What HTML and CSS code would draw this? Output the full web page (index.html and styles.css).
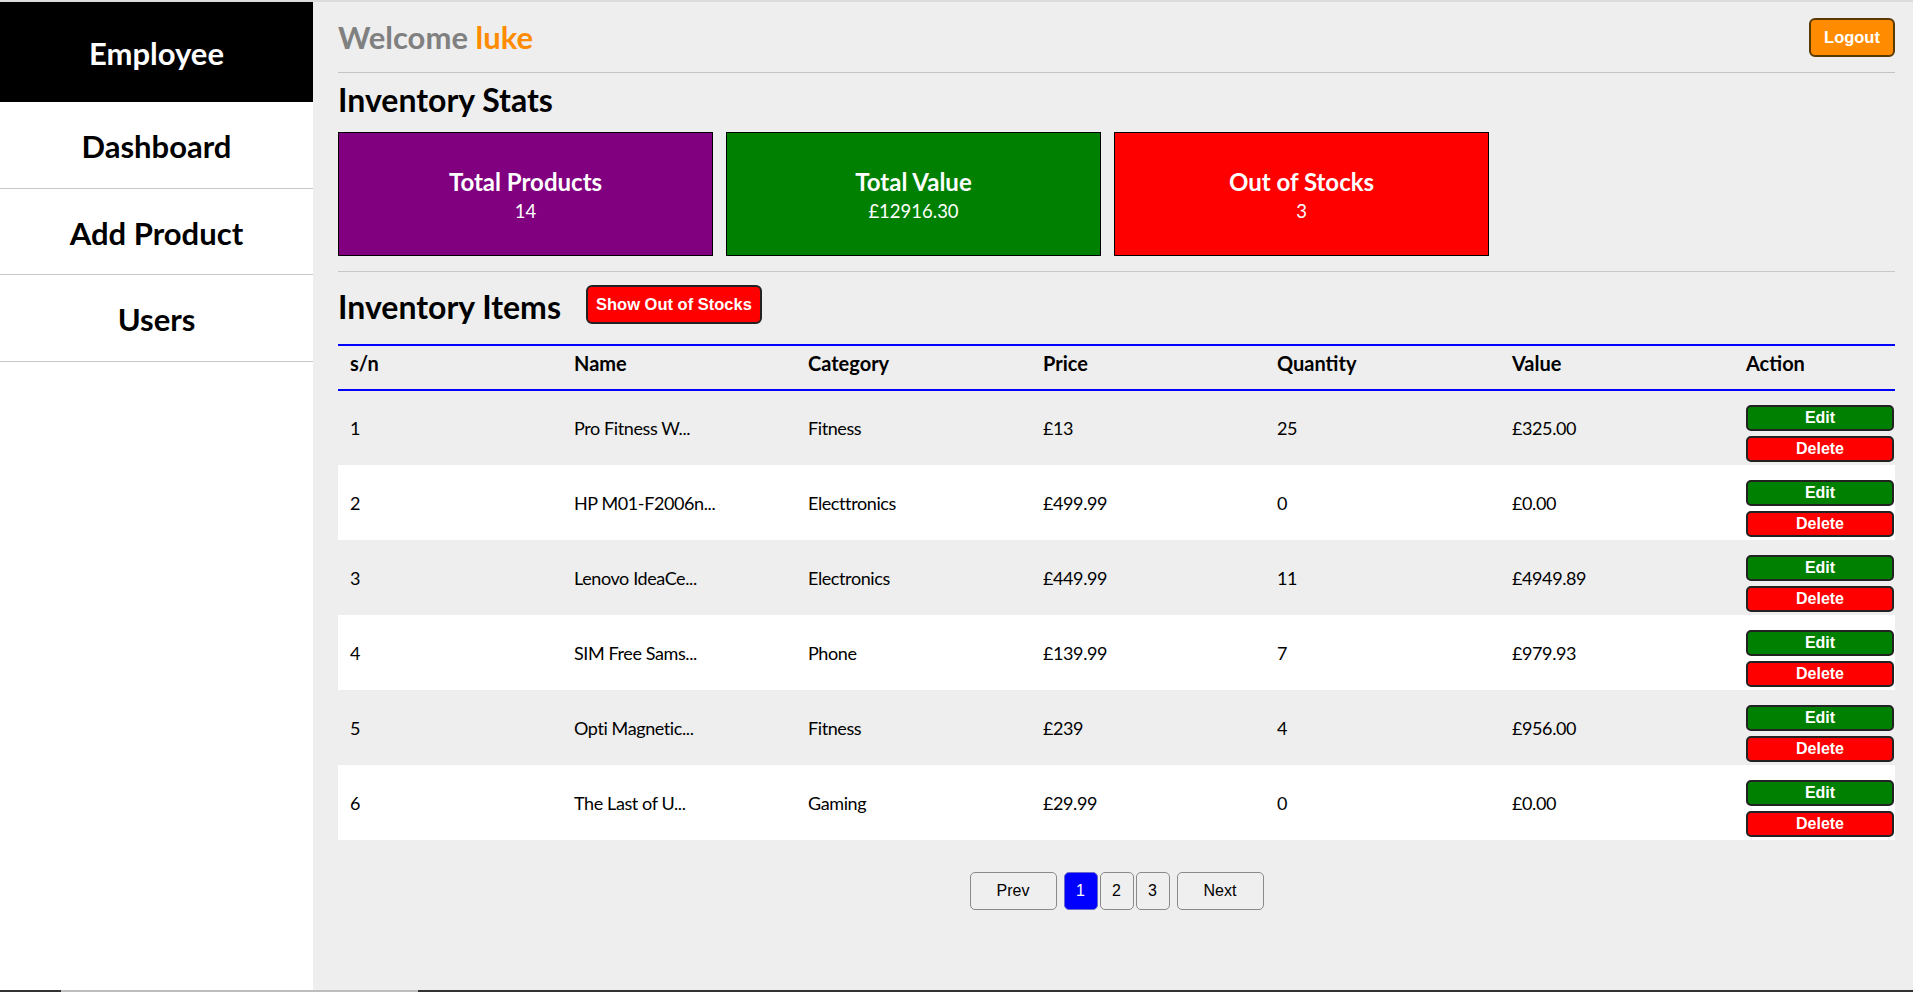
FILE: index.html
```html
<!DOCTYPE html>
<html lang="en">
<head>
<meta charset="utf-8">
<title>Employee Dashboard</title>
<link rel="stylesheet" href="styles.css">
</head>
<body>
<div class="app">
  <div class="topline"></div>
  <div class="frame">
    <aside class="sidebar">
      <div class="brand">Employee</div>
      <nav class="nav">
        <a class="nav-item" href="#">Dashboard</a>
        <a class="nav-item" href="#">Add Product</a>
        <a class="nav-item" href="#">Users</a>
      </nav>
    </aside>
    <main class="main">
      <header class="topbar">
        <h1 class="welcome">Welcome <span class="user">luke</span></h1>
        <button class="btn btn-logout">Logout</button>
      </header>

      <section class="stats">
        <h2 class="section-title">Inventory Stats</h2>
        <div class="cards">
          <div class="card card-purple">
            <div class="card-title">Total Products</div>
            <div class="card-value">14</div>
          </div>
          <div class="card card-green">
            <div class="card-title">Total Value</div>
            <div class="card-value">£12916.30</div>
          </div>
          <div class="card card-red">
            <div class="card-title">Out of Stocks</div>
            <div class="card-value">3</div>
          </div>
        </div>
      </section>

      <section class="items">
        <div class="items-head">
          <h2 class="section-title">Inventory Items</h2>
          <button class="btn btn-oos">Show Out of Stocks</button>
        </div>
        <table class="table">
          <colgroup>
            <col class="c-sn"><col class="c-name"><col class="c-cat"><col class="c-price"><col class="c-qty"><col class="c-val"><col class="c-act">
          </colgroup>
          <thead>
            <tr><th>s/n</th><th>Name</th><th>Category</th><th>Price</th><th>Quantity</th><th>Value</th><th>Action</th></tr>
          </thead>
          <tbody>
            <tr><td>1</td><td>Pro Fitness W...</td><td>Fitness</td><td>£13</td><td>25</td><td>£325.00</td><td class="actions"><div class="act-stack"><button class="btn btn-edit">Edit</button><button class="btn btn-del">Delete</button></div></td></tr>
            <tr><td>2</td><td>HP M01-F2006n...</td><td>Electtronics</td><td>£499.99</td><td>0</td><td>£0.00</td><td class="actions"><div class="act-stack"><button class="btn btn-edit">Edit</button><button class="btn btn-del">Delete</button></div></td></tr>
            <tr><td>3</td><td>Lenovo IdeaCe...</td><td>Electronics</td><td>£449.99</td><td>11</td><td>£4949.89</td><td class="actions"><div class="act-stack"><button class="btn btn-edit">Edit</button><button class="btn btn-del">Delete</button></div></td></tr>
            <tr><td>4</td><td>SIM Free Sams...</td><td>Phone</td><td>£139.99</td><td>7</td><td>£979.93</td><td class="actions"><div class="act-stack"><button class="btn btn-edit">Edit</button><button class="btn btn-del">Delete</button></div></td></tr>
            <tr><td>5</td><td>Opti Magnetic...</td><td>Fitness</td><td>£239</td><td>4</td><td>£956.00</td><td class="actions"><div class="act-stack"><button class="btn btn-edit">Edit</button><button class="btn btn-del">Delete</button></div></td></tr>
            <tr><td>6</td><td>The Last of U...</td><td>Gaming</td><td>£29.99</td><td>0</td><td>£0.00</td><td class="actions"><div class="act-stack"><button class="btn btn-edit">Edit</button><button class="btn btn-del">Delete</button></div></td></tr>
          </tbody>
        </table>
        <div class="pager">
          <button class="pg pg-wide">Prev</button>
          <div class="pg-nums">
            <button class="pg pg-num pg-active">1</button>
            <button class="pg pg-num">2</button>
            <button class="pg pg-num">3</button>
          </div>
          <button class="pg pg-wide">Next</button>
        </div>
      </section>
    </main>
  </div>
  <div class="bottombar"><div class="bb-left"></div><div class="bb-thumb"></div><div class="bb-rest"></div></div>
</div>
</body>
</html>
```

FILE: styles.css
```css
* { box-sizing: border-box; }
html, body { margin: 0; padding: 0; }
body {
  font-family: Lato, "Open Sans", sans-serif;
  color: #000;
  background: #eeeeee;
}
.app {
  height: 992px;
  display: flex;
  flex-direction: column;
  overflow: hidden;
}
.topline { height: 2px; background: #dcdcdc; flex: none; }
.frame { flex: 1; display: flex; min-height: 0; }
.bottombar { height: 2px; flex: none; display: flex; }
.bb-left { width: 61px; background: #333; }
.bb-thumb { width: 357px; background: #bdbdbd; }
.bb-rest { flex: 1; background: #333; }

/* Sidebar */
.sidebar {
  width: 313px;
  flex: none;
  background: #fff;
}
.brand {
  height: 100px;
  background: #000;
  color: #fff;
  font-weight: 700;
  font-size: 31px;
  display: flex;
  align-items: center;
  justify-content: center;
  padding-top: 2px;
}
.nav { display: flex; flex-direction: column; }
.nav-item {
  height: 87px;
  display: flex;
  align-items: center;
  justify-content: center;
  border-bottom: 1px solid #c8c8c8;
  color: #000;
  text-decoration: none;
  font-weight: 700;
  font-size: 31px;
  padding-top: 2px;
}
.nav-item:nth-child(2) { height: 86px; }

/* Main */
.main {
  flex: 1;
  background: #eeeeee;
  padding: 0 18px 0 25px;
}
.topbar {
  height: 71px;
  display: flex;
  align-items: center;
  justify-content: space-between;
  border-bottom: 1px solid #c4c4c4;
}
.welcome {
  margin: 0;
  font-size: 31px;
  font-weight: 700;
  color: #808080;
}
.user { color: #ff8c00; }

.btn {
  font-family: "Liberation Sans", Arial, sans-serif;
  font-weight: 700;
  color: #fff;
  border: 2px solid #222;
  border-radius: 6px;
  cursor: pointer;
}
.btn-logout {
  background: #ff8c00;
  border-color: #5a3a00;
  font-size: 16.5px;
  height: 39px;
  width: 86px;
  padding: 0;
}

.section-title {
  margin: 0;
  font-size: 32px;
  font-weight: 700;
  line-height: 38px;
}
.stats {
  padding-top: 8px;
  padding-bottom: 15px;
  border-bottom: 1px solid #c8c8c8;
}
.cards {
  margin-top: 13px;
  display: flex;
  gap: 13px;
}
.card {
  width: 375px;
  height: 124px;
  border: 1px solid #000;
  color: #fff;
  display: flex;
  flex-direction: column;
  align-items: center;
  justify-content: center;
  padding-top: 5px;
}
.card-purple { background: #800080; }
.card-green { background: #008000; }
.card-red { background: #ff0000; }
.card-title { font-size: 24px; font-weight: 700; line-height: 28px; }
.card-value { font-size: 18.5px; line-height: 30px; }

.items-head {
  margin-top: 13px;
  height: 39px;
  display: flex;
  align-items: center;
  gap: 25px;
}
.items-head .section-title { margin-top: 5px; }
.btn-oos {
  background: #ff0000;
  font-size: 16.5px;
  height: 39px;
  width: 176px;
  padding: 0;
}

.table {
  margin-top: 20px;
  width: 100%;
  border-collapse: collapse;
  table-layout: fixed;
  font-size: 18px;
  letter-spacing: -0.4px;
}
.c-sn { width: 224px; }
.c-name { width: 234px; }
.c-cat { width: 235px; }
.c-price { width: 234px; }
.c-qty { width: 235px; }
.c-val { width: 234px; }
.c-act { width: 161px; }
.table th {
  text-align: left;
  font-weight: 700;
  font-size: 20px;
  letter-spacing: 0;
  padding: 0 12px 9px;
  height: 45px;
  border-top: 2px solid #0000ff;
  border-bottom: 2px solid #0000ff;
}
.table td {
  height: 75px;
  padding: 0 12px;
  vertical-align: middle;
}
.table tbody tr:nth-child(even) { background: #fff; }
.table td.actions { padding: 11px 1px 0 12px; letter-spacing: 0; }
.act-stack { display: flex; flex-direction: column; gap: 5px; }
.btn-edit, .btn-del {
  width: 148px;
  height: 26px;
  padding: 0;
  font-size: 16px;
  line-height: 1;
  border-radius: 5px;
}
.btn-edit { background: #008000; }
.btn-del { background: #ff0000; }

.pager {
  margin-top: 32px;
  display: flex;
  justify-content: center;
  gap: 7px;
}
.pg-nums { display: flex; gap: 2px; }
.pg {
  font-family: "Liberation Sans", Arial, sans-serif;
  font-size: 16px;
  height: 38px;
  background: #efefef;
  color: #000;
  border: 1px solid #8a8a8a;
  border-radius: 5px;
  padding: 0;
  cursor: pointer;
}
.pg-wide { width: 87px; }
.pg-num { width: 34px; }
.pg-active { background: #0000ff; color: #fff; border-color: #6a6acc; }
```
